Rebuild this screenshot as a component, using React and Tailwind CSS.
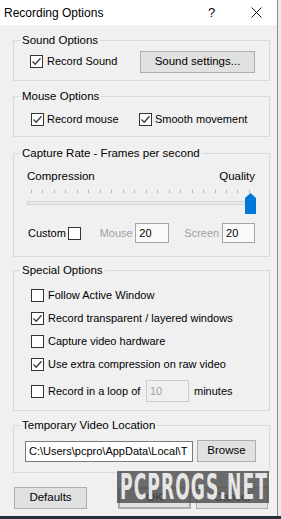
import React from "react";

function Check({ checked }) {
  return (
    <div className="w-[13px] h-[13px] border border-[#333333] bg-white flex items-center justify-center shrink-0">
      {checked && (
        <svg width="11" height="11" viewBox="0 0 11 11">
          <path d="M1.5 5.5 L4.2 8.3 L9.5 2.2" fill="none" stroke="#3a3a3a" strokeWidth="1.3" />
        </svg>
      )}
    </div>
  );
}

function Group({ title, children, className = "" }) {
  return (
    <fieldset className={"min-w-0 border border-[#d9d9d9] " + className}>
      <legend className="ml-[6px] px-[2px] leading-[16px] text-[11.5px] text-black">{title}</legend>
      {children}
    </fieldset>
  );
}

function Btn({ children, className = "" }) {
  return (
    <div className={"h-[22px] border border-[#adadad] bg-[#e1e1e1] flex items-center justify-center text-[11.5px] text-black shrink-0 " + className}>
      {children}
    </div>
  );
}

export default function App() {
  const ticks = Array.from({ length: 20 });
  return (
    <div className="w-[281px] h-[519px] bg-[#26303c] flex flex-col font-['Liberation_Sans',Arial,sans-serif] overflow-hidden">
      <div className="h-[516px] flex">
        <div className="relative w-[278px] flex flex-col bg-[#f0f0f0] border-r border-[#8c8c8c] text-[11px] text-black">
          {/* title bar */}
          <div className="h-[25px] bg-white flex items-center pl-[4px] shrink-0">
            <span className="w-[204px] text-[12px]">Recording Options</span>
            <span className="w-[8px] text-[13px]">?</span>
            <svg className="ml-[35px]" width="11" height="11" viewBox="0 0 11 11">
              <path d="M0.5 0.5 L10.5 10.5 M10.5 0.5 L0.5 10.5" stroke="#111" strokeWidth="1" />
            </svg>
          </div>

          <div className="pl-[13px] pr-[7px] flex flex-col">
            {/* Sound Options */}
            <Group title="Sound Options" className="mt-[7px]">
              <div className="h-[32px] pt-[3px] flex items-start">
                <div className="w-[126px] h-[21px] flex items-center pl-[16px]">
                  <Check checked />
                  <span className="ml-[4px]">Record Sound</span>
                </div>
                <Btn className="w-[115px] h-[21px]">Sound settings...</Btn>
              </div>
            </Group>

            {/* Mouse Options */}
            <Group title="Mouse Options" className="mt-[7px]">
              <div className="h-[32px] flex items-center pb-[2px]">
                <div className="w-[125px] pl-[17px] flex items-center">
                  <Check checked />
                  <span className="ml-[3px]">Record mouse</span>
                </div>
                <Check checked />
                <span className="ml-[3px]">Smooth movement</span>
              </div>
            </Group>

            {/* Capture Rate */}
            <Group title="Capture Rate - Frames per second" className="mt-[8px]">
              <div className="h-[95px] pt-[7px] pl-[13px] pr-[14px] flex flex-col">
                <div className="flex justify-between leading-[16px] text-[11.5px]">
                  <span>Compression</span>
                  <span>Quality</span>
                </div>
                <div className="relative h-[31px]">
                  <div className="flex justify-between pl-[4px] pr-[5px] mt-[6px]">
                    {ticks.map((_, i) => (
                      <div key={i} className="w-[1px] h-[3px] bg-[#b5b5b5]" />
                    ))}
                  </div>
                  <div className="mt-[8px] mr-[5px] h-[4px] border border-[#d6d6d6] bg-[#e8e8e8]" />
                  <svg className="absolute left-[218px] top-[9px]" width="11" height="21" viewBox="0 0 11 21">
                    <path d="M0 5 L5.5 0 L11 5 L11 21 L0 21 Z" fill="#0078d7" />
                  </svg>
                </div>
                <div className="mt-[8px] flex items-center">
                  <span className="ml-[1px] w-[40px]">Custom</span>
                  <Check />
                  <span className="ml-[19px] w-[36px] text-[#a0a0a0]">Mouse</span>
                  <div className="w-[34px] h-[20px] border border-[#a5a5a5] bg-[#fafafa] flex items-center pl-[3px] shrink-0">20</div>
                  <span className="ml-[15px] w-[38px] text-[#a0a0a0]">Screen</span>
                  <div className="w-[33px] h-[20px] border border-[#a5a5a5] bg-[#fafafa] flex items-center pl-[3px] shrink-0">20</div>
                </div>
              </div>
            </Group>

            {/* Special Options */}
            <Group title="Special Options" className="mt-[5px]">
              <div className="pl-[17px] pt-[9px] pb-[8px] flex flex-col gap-[7px]">
                <div className="h-[16px] flex items-center">
                  <Check />
                  <span className="ml-[4px]">Follow Active Window</span>
                </div>
                <div className="h-[16px] flex items-center">
                  <Check checked />
                  <span className="ml-[4px]">Record transparent / layered windows</span>
                </div>
                <div className="h-[16px] flex items-center">
                  <Check />
                  <span className="ml-[4px]">Capture video hardware</span>
                </div>
                <div className="h-[16px] flex items-center">
                  <Check checked />
                  <span className="ml-[4px]">Use extra compression on raw video</span>
                </div>
                <div className="h-[22px] mt-[1px] flex items-center">
                  <Check />
                  <span className="ml-[4px] w-[98px]">Record in a loop of</span>
                  <div className="w-[43px] h-[22px] border border-[#cccccc] bg-[#f0f0f0] text-[#a0a0a0] flex items-center pl-[3px] shrink-0">10</div>
                  <span className="ml-[5px]">minutes</span>
                </div>
              </div>
            </Group>

            {/* Temporary Video Location */}
            <Group title="Temporary Video Location" className="mt-[6px]">
              <div className="pl-[11px] pt-[7px] pb-[10px] flex items-center">
                <div className="w-[168px] h-[21px] border border-[#7a7a7a] bg-white flex items-center pl-[3px] overflow-hidden whitespace-nowrap shrink-0">
                  C:\Users\pcpro\AppData\Local\T
                </div>
                <Btn className="ml-[4px] w-[59px] h-[21px]">Browse</Btn>
              </div>
            </Group>

            {/* bottom buttons */}
            <div className="mt-[14px] flex items-center">
              <Btn className="ml-[1px] w-[73px]">Defaults</Btn>
              <Btn className="ml-[31px] w-[73px] border-2 border-[#0078d7]">OK</Btn>
              <Btn className="ml-[5px] w-[72px]">Cancel</Btn>
            </div>
          </div>

          {/* watermark */}
          <div className="absolute left-[117px] top-[471px] w-[152px] h-[32px] bg-[#4a4a4a]/80 overflow-hidden">
            <div className="absolute left-[3px] top-[-5px] origin-left scale-x-[0.53] whitespace-nowrap font-['DejaVu_Sans_Condensed','DejaVu_Sans',sans-serif] font-bold text-[36px] leading-[42px] text-[#e6e6e6] tracking-[2px]">
              PCPROGS.NET
            </div>
          </div>
        </div>
        <div className="flex-1 bg-[#eaeaea]" />
      </div>
    </div>
  );
}
